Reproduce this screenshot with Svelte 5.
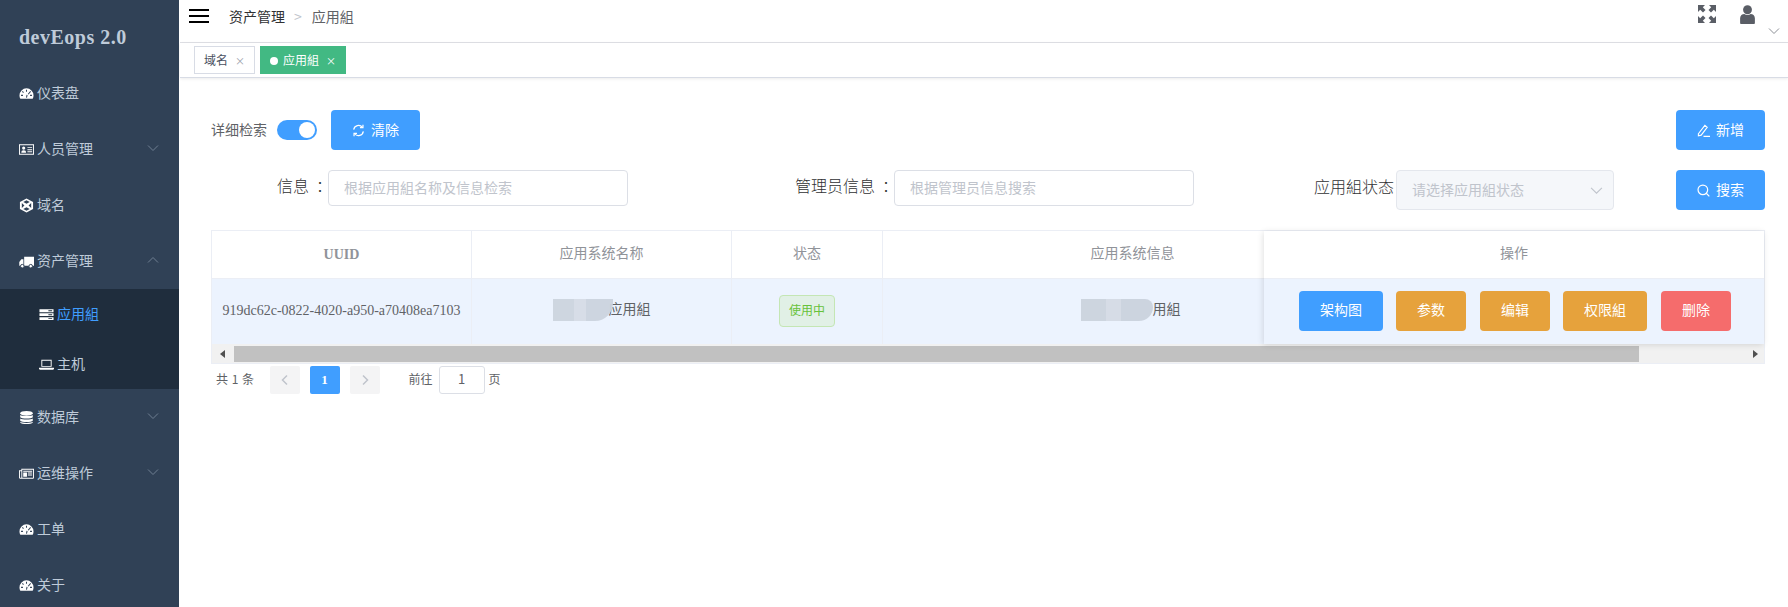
<script>
  const menu = [
    { icon: 'gauge', label: '仪表盘' },
    { icon: 'card', label: '人员管理', arrow: 'down' },
    { icon: 'cube', label: '域名' },
    { icon: 'truck', label: '资产管理', arrow: 'up', children: [
      { icon: 'server', label: '应用組', active: true },
      { icon: 'laptop', label: '主机' }
    ] },
    { icon: 'db', label: '数据库', arrow: 'down' },
    { icon: 'news', label: '运维操作', arrow: 'down' },
    { icon: 'gauge', label: '工单' },
    { icon: 'gauge', label: '关于' }
  ];
  const actions = [
    { label: '架构图', kind: 'primary' },
    { label: '参数', kind: 'warning' },
    { label: '编辑', kind: 'warning' },
    { label: '权限組', kind: 'warning' },
    { label: '删除', kind: 'danger' }
  ];
</script>

{#snippet icon(name)}
  <svg class="mi" viewBox="0 0 16 16" fill="#fff">
    {#if name === 'gauge'}
      <path d="M8 2.500A7.500 7.500 0 0 0 .5 10c0 1.300.3 2.400.9 3.500h13.200c.6-1.100.9-2.200.9-3.500A7.500 7.500 0 0 0 8 2.500z" />
      <path d="M8 4v2M3.600 5.800l1.200 1.200M2.200 10h2M11.800 10h2M12.400 5.800l-2.600 3M8 12.500l.6-3" stroke="#304156" stroke-width="1.100" fill="none" />
    {:else if name === 'card'}
      <path fill-rule="evenodd" d="M0 2.500h16v11H0zM1 3.500v9h14v-9z" />
      <path d="M2.500 11.500c0-2 .8-2.700 2.500-2.700s2.500.7 2.500 2.700z" /><circle cx="5" cy="6.500" r="1.700" />
      <path d="M9 5.500h5v1H9zM9 7.700h5v1H9zM9 9.900h5v1H9z" />
    {:else if name === 'cube'}
      <path fill-rule="evenodd" d="M8 .5l7 3.800v7.400l-7 3.800-7-3.800V4.300zM8 2.400L4.600 4.200 8 6.200l3.400-2zM3 5.400v5.200L5.800 8zM13 5.400L10.200 8l2.800 2.600zM8 9.800l-3.400 2L8 13.600l3.400-1.800z" />
    {:else if name === 'truck'}
      <path d="M5.500 3H16v9.500H5.500zM4.700 5.500H2.500L.3 8.500v4h4.400z" />
      <circle cx="3.500" cy="13" r="1.900" stroke="#304156" /><circle cx="12.500" cy="13" r="1.900" stroke="#304156" />
    {:else if name === 'server'}
      <path d="M.5 2.500h15v3h-15zM.5 6.700h15v3h-15zM.5 10.900h15v3h-15z" />
      <path d="M10 3.500h4v1h-4zM10 7.700h4v1h-4zM10 11.900h4v1h-4z" fill="#1f2d3d" />
    {:else if name === 'laptop'}
      <path fill-rule="evenodd" d="M2.500 3h11v7.500h-11zM3.500 4v5.500h9V4z" /><path d="M0 11.500h16v1.200l-1 .8H1l-1-.8z" />
    {:else if name === 'db'}
      <ellipse cx="8" cy="3.500" rx="6.700" ry="2.500" />
      <path d="M1.300 5.200C2.500 6.800 13.500 6.800 14.700 5.200V7.700C13.500 9.500 2.500 9.500 1.300 7.700zM1.300 9C2.500 10.600 13.500 10.600 14.700 9v2.400c-1.200 1.800-12.200 1.800-13.400 0zM1.300 12.600c1.200 1.600 12.200 1.600 13.400 0v.7C13.500 15.500 2.500 15.500 1.300 13.300z" />
    {:else if name === 'news'}
      <path fill-rule="evenodd" d="M0 4.500h2.500V3H16v9.500c0 .5-.4 1-1 1H1c-.5 0-1-.5-1-1zM3.500 4v8.500h11.500V4zM1 5.500v7h1.500v-7z" />
      <path d="M4.500 5h9.500v1H4.500zM4.500 7h4v4.500h-4zM9.500 7h4.500v1H9.500zM9.500 9h4.500v1H9.500z" />
    {/if}
  </svg>
{/snippet}

{#snippet chevron(dir)}
  <svg class="chev" viewBox="0 0 12 12" fill="none" stroke="currentColor">
    {#if dir === 'up'}<path d="M1 8.500l5-5 5 5" />{:else}<path d="M1 3.500l5 5 5-5" />{/if}
  </svg>
{/snippet}

<div class="page">
  <aside class="sidebar">
    <div class="brand">devEops 2.0</div>
    {#each menu as item}
      <div class="menu-item">
        {@render icon(item.icon)}
        <span class="txt">{item.label}</span>
        {#if item.arrow}{@render chevron(item.arrow)}{/if}
      </div>
      {#if item.children}
        <div class="submenu">
          {#each item.children as child}
            <div class="sub-item" class:active={child.active}>
              {@render icon(child.icon)}
              <span class="txt">{child.label}</span>
            </div>
          {/each}
        </div>
      {/if}
    {/each}
  </aside>

  <main class="main">
    <header class="navbar">
      <div class="burger"><i></i><i></i><i></i></div>
      <nav class="crumbs">
        <span class="crumb-a">资产管理</span>
        <span class="crumb-sep">&gt;</span>
        <span class="crumb-b">应用組</span>
      </nav>
      <div class="nav-right">
        <svg class="full" viewBox="0 0 18 18" fill="#5a5e66">
          <path d="M0 0h7L4.800 2.200 7.500 5 5 7.500 2.200 4.800 0 7zM18 0v7l-2.200-2.200L13 7.500 10.500 5l2.700-2.800L11 0zM0 18v-7l2.200 2.200L5 10.500 7.500 13l-2.700 2.800L7 18zM18 18h-7l2.200-2.200L10.500 13l2.500-2.500 2.800 2.700L18 11z" />
        </svg>
        <svg class="user" viewBox="0 0 14 18" fill="#5a5e66">
          <circle cx="7" cy="4.500" r="4.200" /><path d="M0 17v-4.500C0 10 2 8.500 4 8.500c1.800 1.200 4.200 1.200 6 0 2 0 4 1.500 4 4V17c0 .5-.5 1-1 1H1c-.5 0-1-.5-1-1z" />
        </svg>
        {@render chevron('down')}
      </div>
    </header>

    <div class="tags">
      <span class="tag">域名<em>×</em></span>
      <span class="tag on"><b></b>应用組<em>×</em></span>
    </div>

    <section class="content">
      <div class="row-top">
        <span class="switch-label">详细检索</span>
        <span class="switch"><i></i></span>
        <button class="btn primary clear">
          <svg class="bi" viewBox="0 0 14 14" fill="none" stroke="#fff" stroke-width="1.300"><path d="M1.800 6A5.300 5.300 0 0 1 11.200 3.500M12.200 8A5.300 5.300 0 0 1 2.800 10.500" /><path d="M11.800 .8v3.200H8.600M2.200 13.200V10h3.200" /></svg>
          清除
        </button>
        <button class="btn primary right">
          <svg class="bi" viewBox="0 0 14 14" fill="none" stroke="#fff" stroke-width="1.200"><path d="M1.500 10.500L8.500 1.500l2.500 2-6.500 8.500-3 .8zM7 13.300h7" /></svg>
          新增
        </button>
      </div>

      <div class="row-filter">
        <div class="field f1"><label for="q1">信息<span class="colon">：</span></label><input id="q1" placeholder="根据应用組名称及信息检索" /></div>
        <div class="field f2"><label for="q2">管理员信息<span class="colon">：</span></label><input id="q2" placeholder="根据管理员信息搜索" /></div>
        <div class="field f3">
          <span class="lab3">应用組状态</span>
          <div class="select">请选择应用組状态 {@render chevron('down')}</div>
        </div>
        <button class="btn primary right">
          <svg class="bi" viewBox="0 0 14 14" fill="none" stroke="#fff" stroke-width="1.300"><circle cx="6.300" cy="6.300" r="5.200" /><path d="M10 10l3.300 3.300" /></svg>
          搜索
        </button>
      </div>

      <div class="table">
        <div class="table-body">
          <div class="scroll-part">
            <div class="tr head">
              <div class="c1 uuid-h">UUID</div><div class="c2"><span class="lift">应用系统名称</span></div><div class="c3"><span class="lift">状态</span></div><div class="c4"><span class="lift">应用系统信息</span></div>
            </div>
            <div class="tr rowb">
              <div class="c1 serif">919dc62c-0822-4020-a950-a70408ea7103</div>
              <div class="c2"><span class="mask m1"></span><span class="lift">应用組</span></div>
              <div class="c3"><span class="status">使用中</span></div>
              <div class="c4"><span class="mask m2"></span><span class="lift t2">用組</span></div>
            </div>
          </div>
          <div class="fixed-part">
            <div class="head fh"><span class="lift">操作</span></div>
            <div class="rowb fb">
              {#each actions as a}
                <button class="btn act {a.kind}">{a.label}</button>
              {/each}
            </div>
          </div>
        </div>
        <div class="scrollbar">
          <span class="arr l"></span>
          <div class="thumb"></div>
          <span class="arr r"></span>
        </div>
      </div>

      <div class="pager">
        <span class="total">共 1 条</span>
        <span class="pg off"><svg viewBox="0 0 12 12" fill="none" stroke="#c0c4cc" stroke-width="1.500"><path d="M8 1.500L3.500 6 8 10.500" /></svg></span>
        <span class="pg cur">1</span>
        <span class="pg off"><svg viewBox="0 0 12 12" fill="none" stroke="#c0c4cc" stroke-width="1.500"><path d="M4 1.500L8.500 6 4 10.500" /></svg></span>
        <span class="goto">前往</span>
        <span class="goto-in">1</span>
        <span class="goto-t">页</span>
      </div>
    </section>
  </main>
</div>

<style>
  :global(body) {
    margin: 0;
    background: #fff;
    font-family: "Liberation Serif", "Noto Sans CJK SC", serif;
  }

  .page {
    display: flex;
    height: 607px;
    overflow: hidden;
  }

  .sidebar {
    width: 179px;
    flex: none;
    background: #304156;
    color: #bfcbd9;
    font-family: "Noto Sans CJK SC", sans-serif;
    font-size: 14px;
  }

  .brand {
    height: 65px;
    padding: 10px 0 0 19px;
    box-sizing: border-box;
    font: bold 20px/54px "Liberation Serif", serif;
    letter-spacing: .5px;
    color: #bfcbd9;
  }

  .menu-item {
    height: 56px;
    display: flex;
    align-items: center;
    padding-left: 19px;
    position: relative;
  }

  .txt {
    margin-top: -3px;
  }

  .mi {
    width: 15px;
    height: 15px;
    margin-right: 3px;
    flex: none;
  }

  .menu-item .chev {
    position: absolute;
    right: 20px;
    top: 21px;
    width: 12px;
    height: 12px;
    color: #6f7f92;
  }

  .submenu {
    background: #1f2d3d;
  }

  .sub-item {
    height: 50px;
    display: flex;
    align-items: center;
    padding-left: 39px;
  }

  .sub-item.active {
    color: #409eff;
  }

  .main {
    flex: 1;
    margin-left: 1px;
    min-width: 0;
    font-family: "Noto Sans CJK SC", sans-serif;
    font-size: 14px;
    color: #606266;
  }

  .navbar {
    height: 42px;
    border-bottom: 1px solid #dfe0e5;
    display: flex;
    align-items: flex-start;
  }

  .burger {
    margin: 9px 0 0 9px;
    width: 20px;
    display: flex;
    flex-direction: column;
    gap: 4px;
  }

  .burger i {
    height: 2px;
    background: #000;
  }

  .crumbs {
    margin: 6px 0 0 20px;
    display: flex;
    gap: 9px;
    line-height: 20px;
  }

  .crumb-a { color: #303133; }
  .crumb-sep { color: #c0c4cc; }
  .crumb-b { color: #606266; margin-left: 1px; }

  .nav-right {
    margin-left: auto;
    position: relative;
    width: 120px;
    height: 42px;
  }

  .full {
    position: absolute;
    left: 30px;
    top: 5px;
    width: 18px;
    height: 18px;
  }

  .user {
    position: absolute;
    left: 72px;
    top: 5px;
    width: 15px;
    height: 19px;
  }

  .nav-right .chev {
    position: absolute;
    right: 8px;
    top: 25px;
    width: 12px;
    height: 12px;
    color: #8c8f96;
  }

  .tags {
    height: 34px;
    border-bottom: 1px solid #d8dce5;
    box-shadow: 0 1px 3px rgba(0, 0, 0, .08);
    display: flex;
    align-items: center;
    gap: 5px;
    padding-left: 14px;
  }

  .tag {
    height: 26px;
    padding: 0 9px;
    border: 1px solid #d8dce5;
    font-size: 12px;
    line-height: 26px;
    color: #495060;
    white-space: nowrap;
  }

  .tag em {
    font-style: normal;
    font-size: 10px;
    color: #9aa0aa;
    margin-left: 7px;
  }

  .tag.on {
    background: #42b983;
    border-color: #42b983;
    color: #fff;
  }

  .tag.on em { color: #fff; }

  .tag b {
    display: inline-block;
    width: 8px;
    height: 8px;
    border-radius: 50%;
    background: #fff;
    margin-right: 5px;
  }

  .content {
    padding: 32px 23px 0 31px;
  }

  .row-top,
  .row-filter {
    display: flex;
    align-items: center;
    height: 40px;
  }

  .row-filter {
    margin-top: 20px;
    align-items: flex-start;
  }

  .switch-label {
    font-size: 14px;
    margin-top: -3px;
    color: #606266;
  }

  .switch {
    width: 40px;
    height: 20px;
    margin-left: 10px;
    border-radius: 10px;
    background: #409eff;
    position: relative;
  }

  .switch i {
    position: absolute;
    right: 2px;
    top: 2px;
    width: 16px;
    height: 16px;
    border-radius: 50%;
    background: #fff;
  }

  .btn {
    font-family: "Noto Sans CJK SC", sans-serif;
    font-size: 14px;
    color: #fff;
    border: 0;
    border-radius: 4px;
    height: 40px;
    padding: 0 0 3px;
    display: inline-flex;
    align-items: center;
    justify-content: center;
  }

  .primary { background: #409eff; }
  .warning { background: #e6a23c; }
  .danger { background: #f56c6c; }

  .clear {
    width: 89px;
    margin-left: 14px;
  }

  .right {
    width: 89px;
    margin-left: auto;
  }

  .bi {
    width: 13px;
    height: 13px;
    margin: 3px 6px 0 0;
  }

  .field {
    display: flex;
    justify-content: flex-end;
    align-items: flex-start;
    font-size: 16px;
    font-weight: 300;
    color: #303133;
    flex: none;
  }

  .f1 { width: 417px; }
  .f2 { width: 566px; }
  .f3 { width: 420px; }

  .field label {
    line-height: 30px;
    margin-right: -4px;
    white-space: nowrap;
  }

  .colon {
    margin-left: 7px;
  }

  .lab3 {
    line-height: 32px;
    margin-right: 2px;
  }

  .field input {
    width: 300px;
    height: 36px;
    box-sizing: border-box;
    padding: 0 15px 2px;
    border: 1px solid #dcdfe6;
    border-radius: 4px;
    outline: 0;
    font-family: "Noto Sans CJK SC", sans-serif;
    font-size: 14px;
  }

  .field input::placeholder { color: #c0c4cc; }

  .select {
    width: 218px;
    height: 40px;
    box-sizing: border-box;
    padding: 0 15px;
    background: #f5f7fa;
    border: 1px solid #e4e7ed;
    border-radius: 4px;
    color: #c0c4cc;
    font-size: 14px;
    font-weight: 400;
    line-height: 36px;
    position: relative;
  }

  .select .chev {
    position: absolute;
    right: 10px;
    top: 13px;
    width: 13px;
    height: 13px;
  }

  .table {
    margin-top: 20px;
    border: 1px solid #ebeef5;
  }

  .table-body {
    display: flex;
  }

  .scroll-part {
    flex: 1;
    overflow: hidden;
    min-width: 0;
  }

  .tr {
    display: grid;
    grid-template-columns: 260px 260px 151px 500px;
    width: 1171px;
  }

  .tr > div {
    display: flex;
    align-items: center;
    justify-content: center;
    border-right: 1px solid #ebeef5;
    box-sizing: border-box;
  }

  .tr.rowb > div {
    padding-bottom: 2px;
  }

  .lift {
    margin-top: -5px;
  }

  .head {
    height: 47px;
    color: #909399;
    font-size: 14px;
    border-bottom: 1px solid #ebeef5;
  }

  .uuid-h {
    font: bold 14px "Liberation Serif", serif;
  }

  .rowb {
    height: 65px;
    background: #ecf3fe;
    font-size: 14px;
    color: #606266;
  }

  .serif {
    font: 14px "Liberation Serif", serif;
    white-space: nowrap;
  }

  .mask {
    display: inline-block;
    height: 22px;
    margin-top: -1px;
    filter: blur(.6px);
    background: linear-gradient(90deg, #cdd5df, #cdd5df 35%, #d6dce6 35%, #d6dce6 55%, #ccd4df 55%, #ccd4df);
  }

  .m1 {
    width: 60px;
    margin-right: -4px;
    border-radius: 0 0 18px 0;
    opacity: .95;
  }

  .m2 {
    width: 72px;
    border-radius: 0 8px 14px 0;
  }

  .t2 {
    margin-right: 4px;
  }

  .status {
    display: inline-block;
    height: 32px;
    line-height: 28px;
    padding: 0 9px;
    box-sizing: border-box;
    font-size: 12px;
    color: #67c23a;
    background: #e1f0e6;
    border: 1px solid #c4e6b4;
    border-radius: 4px;
  }

  .fixed-part {
    width: 500px;
    flex: none;
    box-shadow: -1px 1px 6px rgba(0, 0, 0, .12);
    position: relative;
  }

  .fh {
    display: flex;
    align-items: center;
    justify-content: center;
  }

  .fb {
    display: flex;
    align-items: center;
    box-sizing: border-box;
    padding: 0 0 2px 35px;
  }

  .act:nth-child(1) { width: 84px; }
  .act:nth-child(2) { width: 70px; margin-left: 13px; }
  .act:nth-child(3) { width: 70px; margin-left: 14px; }
  .act:nth-child(4) { width: 84px; margin-left: 13px; }
  .act:nth-child(5) { width: 70px; margin-left: 14px; }

  .scrollbar {
    height: 18px;
    background: #f1f1f1;
    display: flex;
    align-items: center;
    padding-top: 1px;
  }

  .arr {
    width: 0;
    height: 0;
    border: 4px solid transparent;
    flex: none;
  }

  .arr.l {
    border-right: 5px solid #505050;
    border-left: 0;
    margin: 0 9px 0 8px;
  }

  .arr.r {
    border-left: 5px solid #505050;
    border-right: 0;
    margin-left: auto;
    margin-right: 6px;
  }

  .thumb {
    width: 1405px;
    height: 16px;
    background: #c1c1c1;
  }

  .pager {
    display: flex;
    align-items: center;
    height: 28px;
    margin-top: 2px;
    font-size: 12px;
    color: #606266;
  }

  .total { margin: -3px 15px 0 5px; letter-spacing: .5px; }

  .pg {
    width: 30px;
    height: 28px;
    margin-right: 10px;
    background: #f4f4f5;
    border-radius: 2px;
    display: flex;
    align-items: center;
    justify-content: center;
  }

  .pg svg {
    width: 12px;
    height: 12px;
  }

  .pg.cur {
    background: #409eff;
    color: #fff;
    font: bold 13px "Liberation Serif", serif;
  }

  .goto { margin: -3px 0 0 19px; }

  .goto-in {
    width: 46px;
    height: 28px;
    box-sizing: border-box;
    margin: 0 4px 0 6px;
    border: 1px solid #dcdfe6;
    border-radius: 3px;
    text-align: center;
    line-height: 24px;
    font-size: 13px;
  }

  .goto-t { margin-top: -3px; }
</style>
